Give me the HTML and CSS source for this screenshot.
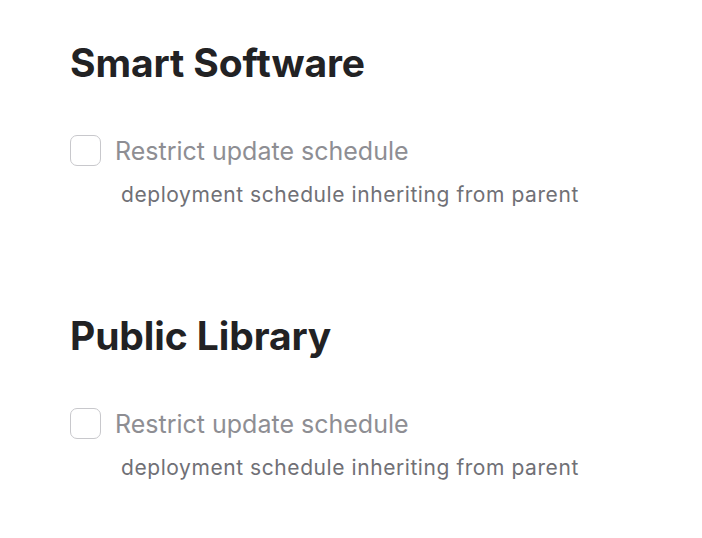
FILE: index.html
```html
<!DOCTYPE html>
<html lang="en">
<head>
    <meta charset="UTF-8">
    <title>Update Schedule</title>
    <link rel="stylesheet" href="styles.css">
</head>
<body>
    <div class="page">
        <section class="group">
            <h2>Smart Software</h2>
            <label class="option">
                <span class="box"></span>
                <span class="label-text">Restrict update schedule</span>
            </label>
            <p class="hint">deployment schedule inheriting from parent</p>
        </section>
        <section class="group">
            <h2>Public Library</h2>
            <label class="option">
                <span class="box"></span>
                <span class="label-text">Restrict update schedule</span>
            </label>
            <p class="hint">deployment schedule inheriting from parent</p>
        </section>
    </div>
</body>
</html>
```

FILE: styles.css
```css
body {
    margin: 0;
    background: #fff;
    font-family: 'Inter', 'Noto Sans', sans-serif;
}
.page {
    padding: 40px 70px 0;
}
.group {
    height: 273px;
}
.group:last-child {
    height: auto;
}
h2 {
    margin: 0;
    font-size: 39px;
    font-weight: 700;
    color: #222224;
    letter-spacing: -0.1px;
    line-height: 46px;
}
.option {
    display: flex;
    align-items: center;
    gap: 14px;
    margin-top: 49px;
}
.box {
    width: 29px;
    height: 29px;
    border: 1px solid #c8c8cc;
    border-radius: 7px;
}
.label-text {
    font-size: 25px;
    color: #8e8e93;
}
.hint {
    margin: 16px 0 0 51px;
    font-size: 21px;
    letter-spacing: 0.57px;
    color: #707076;
}
```
